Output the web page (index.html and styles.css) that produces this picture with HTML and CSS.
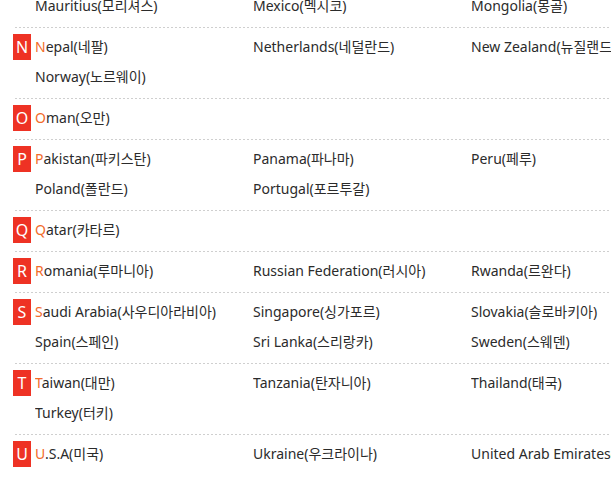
FILE: index.html
```html
<!DOCTYPE html>
<html lang="ko">
<head>
<meta charset="utf-8">
<title>Countries</title>
<link rel="stylesheet" href="styles.css">
</head>
<body>
<div class="list">
  <section class="group group-cut">
    <div class="items">
      <span class="item">Mauritius(모리셔스)</span>
      <span class="item">Mexico(멕시코)</span>
      <span class="item">Mongolia(몽골)</span>
    </div>
  </section>
  <section class="group">
    <span class="badge">N</span>
    <div class="items">
      <span class="item"><em>N</em>epal(네팔)</span>
      <span class="item">Netherlands(네덜란드)</span>
      <span class="item">New Zealand(뉴질랜드)</span>
      <span class="item">Norway(노르웨이)</span>
    </div>
  </section>
  <section class="group">
    <span class="badge">O</span>
    <div class="items">
      <span class="item"><em>O</em>man(오만)</span>
    </div>
  </section>
  <section class="group">
    <span class="badge">P</span>
    <div class="items">
      <span class="item"><em>P</em>akistan(파키스탄)</span>
      <span class="item">Panama(파나마)</span>
      <span class="item">Peru(페루)</span>
      <span class="item">Poland(폴란드)</span>
      <span class="item">Portugal(포르투갈)</span>
    </div>
  </section>
  <section class="group">
    <span class="badge">Q</span>
    <div class="items">
      <span class="item"><em>Q</em>atar(카타르)</span>
    </div>
  </section>
  <section class="group">
    <span class="badge">R</span>
    <div class="items">
      <span class="item"><em>R</em>omania(루마니아)</span>
      <span class="item">Russian Federation(러시아)</span>
      <span class="item">Rwanda(르완다)</span>
    </div>
  </section>
  <section class="group">
    <span class="badge">S</span>
    <div class="items">
      <span class="item"><em>S</em>audi Arabia(사우디아라비아)</span>
      <span class="item">Singapore(싱가포르)</span>
      <span class="item">Slovakia(슬로바키아)</span>
      <span class="item">Spain(스페인)</span>
      <span class="item">Sri Lanka(스리랑카)</span>
      <span class="item">Sweden(스웨덴)</span>
    </div>
  </section>
  <section class="group">
    <span class="badge">T</span>
    <div class="items">
      <span class="item"><em>T</em>aiwan(대만)</span>
      <span class="item">Tanzania(탄자니아)</span>
      <span class="item">Thailand(태국)</span>
      <span class="item">Turkey(터키)</span>
    </div>
  </section>
  <section class="group">
    <span class="badge">U</span>
    <div class="items">
      <span class="item"><em>U</em>.S.A(미국)</span>
      <span class="item">Ukraine(우크라이나)</span>
      <span class="item">United Arab Emirates(아랍에미리트)</span>
    </div>
  </section>
</div>
</body>
</html>
```

FILE: styles.css
```css
html, body {
  margin: 0;
  padding: 0;
  background: #ffffff;
  overflow: hidden;
}

body {
  font-family: "Noto Sans", "Noto Sans CJK KR", sans-serif;
  font-size: 14px;
  color: #2b2b2b;
}

.list {
  margin: -13px 0 0 13px;
  width: 680px;
}

.group {
  display: flex;
  align-items: flex-start;
  padding: 4px 0 6px 0;
  background-image: repeating-linear-gradient(to right, transparent 0 2px, #cfcfcf 2px 4px);
  background-size: 100% 1px;
  background-repeat: no-repeat;
  background-position: 0 0;
  border-top: 1px solid transparent;
  background-origin: border-box;
}

.group-cut {
  background-image: none;
  border-top: 0;
}

.group-cut .items {
  margin-left: 22px;
}

.badge {
  flex: 0 0 auto;
  width: 18px;
  height: 26px;
  margin-top: 2px;
  margin-right: 4px;
  background: #ee3224;
  color: #ffffff;
  font-size: 16px;
  line-height: 26px;
  text-align: center;
}

.items {
  display: grid;
  grid-template-columns: repeat(3, 218px);
}

.item {
  height: 30px;
  line-height: 30px;
  white-space: nowrap;
  overflow: hidden;
}

.item em {
  font-style: normal;
  color: #f26b2a;
}
```
